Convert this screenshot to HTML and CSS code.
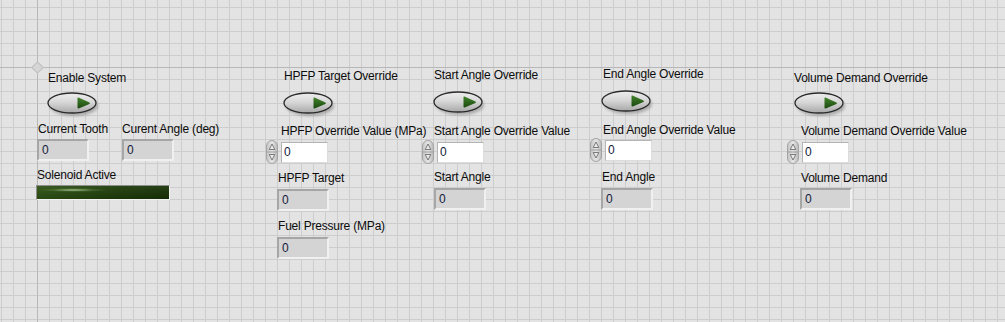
FILE: index.html
```html
<!DOCTYPE html>
<html>
<head>
<meta charset="utf-8">
<link rel="stylesheet" href="styles.css">
</head>
<body>
<div class="panel">
  <div class="origin"></div>

  <div class="ctl c-enable">
    <div class="lbl">Enable System</div>
    <div class="w">
      <svg class="btn" width="54" height="26" viewBox="0 0 54 26">
        <defs>
          <linearGradient id="bg" x1="0" y1="0" x2="0" y2="1"><stop offset="0" stop-color="#eeeeee"/><stop offset=".45" stop-color="#d8d8d8"/><stop offset="1" stop-color="#a8a8a8"/></linearGradient>
          <linearGradient id="tg" x1="0" y1="0" x2="0" y2="1"><stop offset="0" stop-color="#40822a"/><stop offset="1" stop-color="#1c4a10"/></linearGradient>
          <linearGradient id="sg" x1="0" y1="0" x2="1" y2="0"><stop offset="0" stop-color="#c4c4c4"/><stop offset=".5" stop-color="#e6e6e6"/><stop offset="1" stop-color="#b8b8b8"/></linearGradient>
          <filter id="bl" x="-20%" y="-40%" width="140%" height="180%"><feGaussianBlur stdDeviation="1.4"/></filter>
        </defs>
        <ellipse cx="27" cy="14" rx="24" ry="10" fill="#7a7a7a" opacity=".55" filter="url(#bl)"/>
        <ellipse cx="25" cy="11" rx="24" ry="10" fill="url(#bg)" stroke="#2b2b2b" stroke-width="1.3"/>
        <path d="M31.5 5.6 Q30.5 5.2 30.5 6.8 L30.5 15.2 Q30.5 16.8 31.8 16.4 L42.4 11.9 Q43.6 11.2 42.4 10.5 Z" fill="url(#tg)"/>
      </svg>
    </div>
  </div>

  <div class="ctl c-tooth">
    <div class="lbl">Current Tooth</div>
    <div class="w"><div class="ind">0</div></div>
  </div>
  <div class="ctl c-angle">
    <div class="lbl">Curent Angle (deg)</div>
    <div class="w"><div class="ind">0</div></div>
  </div>
  <div class="ctl c-sol">
    <div class="lbl">Solenoid Active</div>
    <div class="w"><div class="led"></div></div>
  </div>

  <!-- HPFP -->
  <div class="ctl c-hov">
    <div class="lbl">HPFP Target Override</div>
    <div class="w">
      <svg class="btn" width="54" height="26" viewBox="0 0 54 26">
        <ellipse cx="27" cy="14" rx="24" ry="10" fill="#7a7a7a" opacity=".55" filter="url(#bl)"/>
        <ellipse cx="25" cy="11" rx="24" ry="10" fill="url(#bg)" stroke="#2b2b2b" stroke-width="1.3"/>
        <path d="M31.5 5.6 Q30.5 5.2 30.5 6.8 L30.5 15.2 Q30.5 16.8 31.8 16.4 L42.4 11.9 Q43.6 11.2 42.4 10.5 Z" fill="url(#tg)"/>
      </svg>
    </div>
  </div>
  <div class="ctl c-hval">
    <div class="lbl">HPFP Override Value (MPa)</div>
    <div class="w num">
      <svg class="spin" width="12" height="24" viewBox="0 0 12 24">
        <rect x=".5" y=".5" width="11" height="23" rx="5.5" fill="url(#sg)" stroke="#a4a4a4"/>
        <line x1="1" y1="12" x2="11" y2="12" stroke="#9c9c9c"/>
        <path d="M3.2 9.5 L6 4 L8.8 9.5 Z" fill="#ececec" stroke="#6c6c6c" stroke-width=".9"/>
        <path d="M3.2 14.5 L8.8 14.5 L6 20 Z" fill="#ececec" stroke="#6c6c6c" stroke-width=".9"/>
      </svg>
      <div class="ctrl">0</div>
    </div>
  </div>
  <div class="ctl c-htgt">
    <div class="lbl">HPFP Target</div>
    <div class="w"><div class="ind">0</div></div>
  </div>
  <div class="ctl c-fuel">
    <div class="lbl">Fuel Pressure (MPa)</div>
    <div class="w"><div class="ind">0</div></div>
  </div>

  <!-- Start angle -->
  <div class="ctl c-sov">
    <div class="lbl">Start Angle Override</div>
    <div class="w">
      <svg class="btn" width="54" height="26" viewBox="0 0 54 26">
        <ellipse cx="27" cy="14" rx="24" ry="10" fill="#7a7a7a" opacity=".55" filter="url(#bl)"/>
        <ellipse cx="25" cy="11" rx="24" ry="10" fill="url(#bg)" stroke="#2b2b2b" stroke-width="1.3"/>
        <path d="M31.5 5.6 Q30.5 5.2 30.5 6.8 L30.5 15.2 Q30.5 16.8 31.8 16.4 L42.4 11.9 Q43.6 11.2 42.4 10.5 Z" fill="url(#tg)"/>
      </svg>
    </div>
  </div>
  <div class="ctl c-sval">
    <div class="lbl">Start Angle Override Value</div>
    <div class="w num">
      <svg class="spin" width="12" height="24" viewBox="0 0 12 24">
        <rect x=".5" y=".5" width="11" height="23" rx="5.5" fill="url(#sg)" stroke="#a4a4a4"/>
        <line x1="1" y1="12" x2="11" y2="12" stroke="#9c9c9c"/>
        <path d="M3.2 9.5 L6 4 L8.8 9.5 Z" fill="#ececec" stroke="#6c6c6c" stroke-width=".9"/>
        <path d="M3.2 14.5 L8.8 14.5 L6 20 Z" fill="#ececec" stroke="#6c6c6c" stroke-width=".9"/>
      </svg>
      <div class="ctrl">0</div>
    </div>
  </div>
  <div class="ctl c-sa">
    <div class="lbl">Start Angle</div>
    <div class="w"><div class="ind">0</div></div>
  </div>

  <!-- End angle -->
  <div class="ctl c-eov">
    <div class="lbl">End Angle Override</div>
    <div class="w">
      <svg class="btn" width="54" height="26" viewBox="0 0 54 26">
        <ellipse cx="27" cy="14" rx="24" ry="10" fill="#7a7a7a" opacity=".55" filter="url(#bl)"/>
        <ellipse cx="25" cy="11" rx="24" ry="10" fill="url(#bg)" stroke="#2b2b2b" stroke-width="1.3"/>
        <path d="M31.5 5.6 Q30.5 5.2 30.5 6.8 L30.5 15.2 Q30.5 16.8 31.8 16.4 L42.4 11.9 Q43.6 11.2 42.4 10.5 Z" fill="url(#tg)"/>
      </svg>
    </div>
  </div>
  <div class="ctl c-eval">
    <div class="lbl">End Angle Override Value</div>
    <div class="w num">
      <svg class="spin" width="12" height="24" viewBox="0 0 12 24">
        <rect x=".5" y=".5" width="11" height="23" rx="5.5" fill="url(#sg)" stroke="#a4a4a4"/>
        <line x1="1" y1="12" x2="11" y2="12" stroke="#9c9c9c"/>
        <path d="M3.2 9.5 L6 4 L8.8 9.5 Z" fill="#ececec" stroke="#6c6c6c" stroke-width=".9"/>
        <path d="M3.2 14.5 L8.8 14.5 L6 20 Z" fill="#ececec" stroke="#6c6c6c" stroke-width=".9"/>
      </svg>
      <div class="ctrl">0</div>
    </div>
  </div>
  <div class="ctl c-ea">
    <div class="lbl">End Angle</div>
    <div class="w"><div class="ind">0</div></div>
  </div>

  <!-- Volume demand -->
  <div class="ctl c-vov">
    <div class="lbl">Volume Demand Override</div>
    <div class="w">
      <svg class="btn" width="54" height="26" viewBox="0 0 54 26">
        <ellipse cx="27" cy="14" rx="24" ry="10" fill="#7a7a7a" opacity=".55" filter="url(#bl)"/>
        <ellipse cx="25" cy="11" rx="24" ry="10" fill="url(#bg)" stroke="#2b2b2b" stroke-width="1.3"/>
        <path d="M31.5 5.6 Q30.5 5.2 30.5 6.8 L30.5 15.2 Q30.5 16.8 31.8 16.4 L42.4 11.9 Q43.6 11.2 42.4 10.5 Z" fill="url(#tg)"/>
      </svg>
    </div>
  </div>
  <div class="ctl c-vval">
    <div class="lbl">Volume Demand Override Value</div>
    <div class="w num">
      <svg class="spin" width="12" height="24" viewBox="0 0 12 24">
        <rect x=".5" y=".5" width="11" height="23" rx="5.5" fill="url(#sg)" stroke="#a4a4a4"/>
        <line x1="1" y1="12" x2="11" y2="12" stroke="#9c9c9c"/>
        <path d="M3.2 9.5 L6 4 L8.8 9.5 Z" fill="#ececec" stroke="#6c6c6c" stroke-width=".9"/>
        <path d="M3.2 14.5 L8.8 14.5 L6 20 Z" fill="#ececec" stroke="#6c6c6c" stroke-width=".9"/>
      </svg>
      <div class="ctrl">0</div>
    </div>
  </div>
  <div class="ctl c-vd">
    <div class="lbl">Volume Demand</div>
    <div class="w"><div class="ind">0</div></div>
  </div>
</div>
</body>
</html>
```

FILE: styles.css
```css
html, body {
  margin: 0;
  padding: 0;
}
body {
  width: 1005px;
  height: 322px;
  overflow: hidden;
  font-family: "Liberation Sans", Arial, sans-serif;
  font-size: 12px;
  color: #0c0c0c;
}
.panel {
  position: relative;
  width: 1005px;
  height: 322px;
  background-color: #e3e3e3;
  background-image:
    linear-gradient(#b7b7b7, #b7b7b7),
    linear-gradient(#b7b7b7, #b7b7b7),
    linear-gradient(to right, #cdcdcd 1px, transparent 1px),
    linear-gradient(to bottom, #cdcdcd 1px, transparent 1px);
  background-size: 100% 1px, 1px 100%, 12px 12px, 12px 12px;
  background-position: 0 67px, 37px 0, 1px 7px, 1px 7px;
  background-repeat: no-repeat, no-repeat, repeat, repeat;
}
.origin {
  position: absolute;
  left: 33px;
  top: 63px;
  width: 7px;
  height: 7px;
  background: #d6d6d6;
  border: 1px solid #bdbdbd;
  transform: rotate(45deg);
}

.ctl {
  position: absolute;
  display: flex;
  flex-direction: column;
  align-items: flex-start;
}
.lbl {
  height: 14px;
  line-height: 14px;
  white-space: nowrap;
  letter-spacing: -0.2px;
  margin-left: var(--lx, 0px);
}
.w {
  margin-left: var(--wx, 0px);
  margin-top: var(--wy, 3px);
  display: flex;
}
.btn {
  display: block;
}
.num {
  align-items: center;
  gap: 3px;
}
.spin {
  display: block;
}
.ind {
  box-sizing: border-box;
  width: 52px;
  height: 22px;
  border: 2px solid;
  border-color: #a6a6a6 #f0f0f0 #f0f0f0 #a6a6a6;
  background: #d4d4d4;
  padding-left: 3px;
  line-height: 18px;
  color: #141a3a;
}
.ctrl {
  box-sizing: border-box;
  width: 47px;
  height: 21px;
  border: 1px solid;
  border-color: #b4b4b4 #dcdcdc #dcdcdc #b4b4b4;
  background: #ffffff;
  padding-left: 2px;
  line-height: 19px;
  color: #141a3a;
}
.led {
  box-sizing: border-box;
  width: 134px;
  height: 15px;
  border: 1px solid;
  border-color: #8e8e8e #f2f2f2 #f2f2f2 #8e8e8e;
  background:
    radial-gradient(ellipse 34px 2px at 36px 4px, rgba(200, 225, 180, 0.8), rgba(120, 160, 90, 0.3) 60%, transparent 100%),
    linear-gradient(to bottom, rgba(255,255,255,0.06), rgba(0,0,0,0.12)),
    linear-gradient(to right, #2f5214, #1e3d0a 60%, #173206);
}

/* positions on the front-panel canvas */
.c-enable { left: 47px; top: 71px; --lx: 1px; --wy: 7px; }
.c-tooth  { left: 37px; top: 122px; --lx: 1px; --wy: 3px; }
.c-angle  { left: 122px; top: 122px; --wy: 3px; }
.c-sol    { left: 36px; top: 168px; --lx: 1px; --wy: 3px; }

.c-hov    { left: 283px; top: 69px; --lx: 1px; --wy: 9px; }
.c-hval   { left: 266px; top: 124px; --lx: 15px; --wy: 2px; }
.c-htgt   { left: 277px; top: 171px; --lx: 1px; --wy: 4px; }
.c-fuel   { left: 277px; top: 219px; --lx: 1px; --wy: 4px; }

.c-sov    { left: 433px; top: 68px; --lx: 1px; --wy: 9px; }
.c-sval   { left: 422px; top: 124px; --lx: 12px; --wy: 2px; }
.c-sa     { left: 434px; top: 170px; --wy: 4px; }

.c-eov    { left: 601px; top: 67px; --lx: 2px; --wy: 9px; }
.c-eval   { left: 590px; top: 123px; --lx: 13px; --wy: 1px; }
.c-ea     { left: 601px; top: 170px; --lx: 1px; --wy: 4px; }

.c-vov    { left: 794px; top: 71px; --wy: 7px; }
.c-vval   { left: 787px; top: 124px; --lx: 14px; --wy: 2px; }
.c-vd     { left: 800px; top: 171px; --lx: 1px; --wy: 3px; }
```
